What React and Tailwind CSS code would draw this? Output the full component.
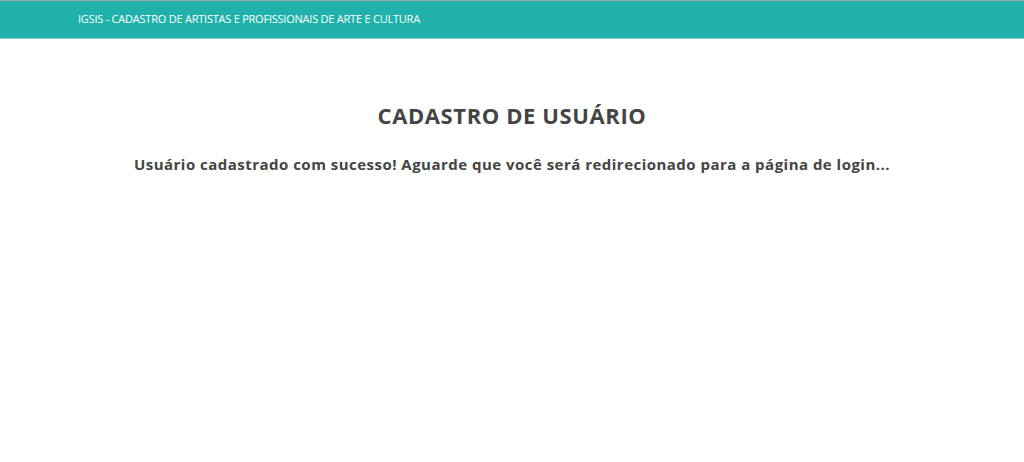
import React from 'react';

const App = () => {
  return (
    <div className="min-h-[462px] bg-white" style={{ fontFamily: '"Open Sans", sans-serif' }}>
      <header className="h-[39px] bg-[#20b2aa] border-t border-[#9aa7a6] border-b border-b-[#7fd3ce] flex items-center">
        <div className="pl-[78px] text-[11px] text-white tracking-[-0.23px]">
          IGSIS - CADASTRO DE ARTISTAS E PROFISSIONAIS DE ARTE E CULTURA
        </div>
      </header>

      <main className="pt-[61px] text-center text-[#444]">
        <h1 className="text-[22px] font-bold tracking-[0.6px] leading-[30px]">CADASTRO DE USUÁRIO</h1>
        <p className="mt-[24px] text-[15px] font-bold tracking-[0.48px] leading-[20px]">
          Usuário cadastrado com sucesso! Aguarde que você será redirecionado para a página de login...
        </p>
      </main>
    </div>
  );
};

export default App;
